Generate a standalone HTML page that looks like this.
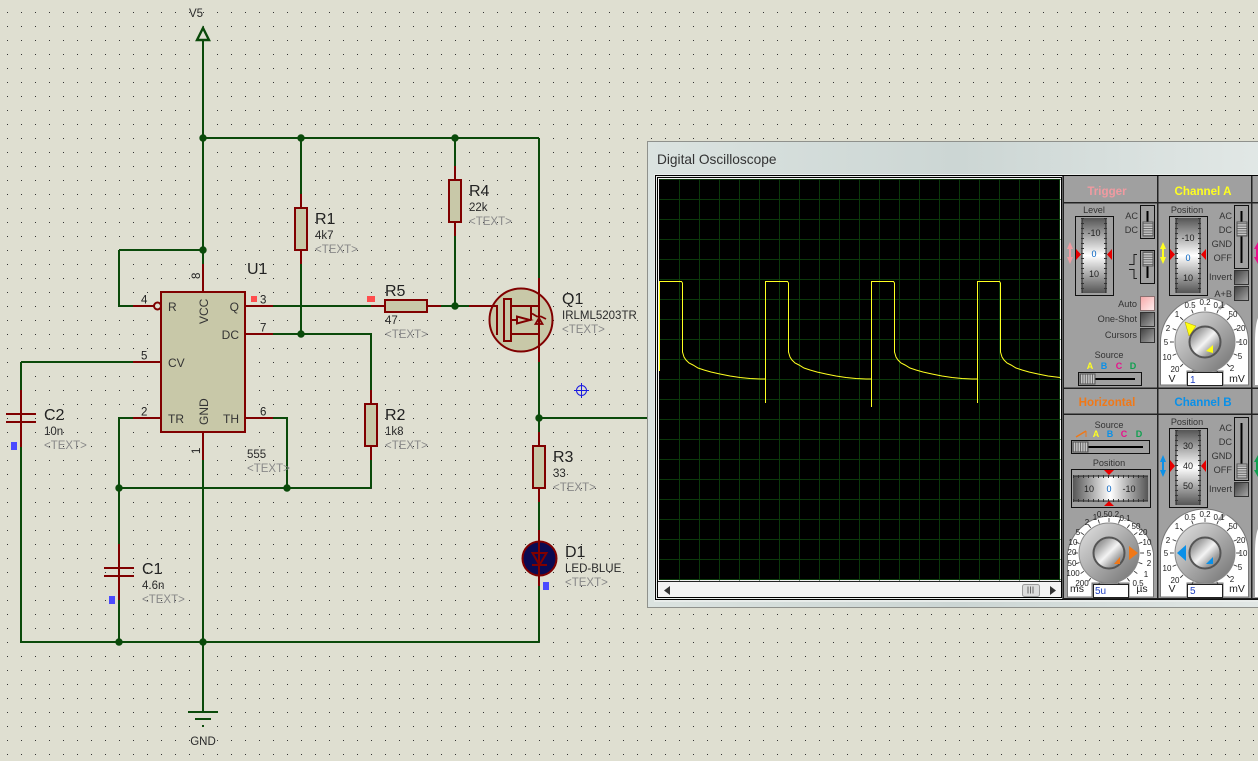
<!DOCTYPE html>
<html><head><meta charset="utf-8"><style>
html,body{margin:0;padding:0;background:#dfdfd1;overflow:hidden}
svg{display:block;font-family:"Liberation Sans",sans-serif}
.g{stroke:#0a4a0a;stroke-width:2;fill:none;shape-rendering:crispEdges}
.r{stroke:#800000;stroke-width:2;fill:none;shape-rendering:crispEdges}
.b{stroke:#800000;stroke-width:2;fill:#c8c8a8;shape-rendering:crispEdges}
.j{fill:#0a4a0a}
.big{font-size:16px;fill:#222}
.sm{font-size:11.500px;fill:#2a2a2a}
.tx{font-size:11.500px;fill:#888}
.pin{font-size:11.500px;fill:#222}
.in{font-size:12px;fill:#333}
.l{font-size:9.200px;fill:#333}
.e{text-anchor:end}
.m{text-anchor:middle}
.d{font-size:8px;fill:#222;text-anchor:middle}
.w{font-size:10.500px;fill:#222;text-anchor:middle}
.n{font-size:9px;fill:#222;text-anchor:middle}
.p{font-size:9.100px;fill:#333;text-anchor:middle}
.h{font-size:11.600px;font-weight:bold;text-anchor:middle}
.gl{stroke:#0b380b;stroke-width:1;shape-rendering:crispEdges}
.tk{fill:none;stroke:#333;stroke-width:4}
</style></head><body>
<svg width="1258" height="761" viewBox="0 0 1258 761" xmlns="http://www.w3.org/2000/svg">
<defs>
<pattern id="dots" x="7" y="12" width="14" height="14" patternUnits="userSpaceOnUse"><rect width="1" height="1" fill="#333"/></pattern>
<pattern id="stH" width="4" height="2.400" patternUnits="userSpaceOnUse"><rect width="4" height="2.400" fill="#c8c8c8"/><rect width="4" height="1" fill="#6a6a6a"/></pattern>
<pattern id="stV" width="2.400" height="4" patternUnits="userSpaceOnUse"><rect width="2.400" height="4" fill="#c8c8c8"/><rect width="1" height="4" fill="#6a6a6a"/></pattern>
<linearGradient id="wv" x1="0" y1="0" x2="0" y2="1"><stop offset="0" stop-color="#555"/><stop offset=".5" stop-color="#fff"/><stop offset="1" stop-color="#555"/></linearGradient>
<linearGradient id="wh" x1="0" y1="0" x2="1" y2="0"><stop offset="0" stop-color="#555"/><stop offset=".5" stop-color="#fff"/><stop offset="1" stop-color="#555"/></linearGradient>
<linearGradient id="btn" x1="0" y1="0" x2="1" y2="1"><stop offset="0" stop-color="#3f3f3f"/><stop offset="1" stop-color="#a8a8a8"/></linearGradient>
<linearGradient id="pnk" x1="0" y1="0" x2="1" y2="1"><stop offset="0" stop-color="#f6a8a8"/><stop offset="1" stop-color="#fff0f0"/></linearGradient>
<linearGradient id="kn" x1="0" y1="0" x2="1" y2="1"><stop offset="0" stop-color="#e4e4e4"/><stop offset=".5" stop-color="#aaa"/><stop offset="1" stop-color="#707070"/></linearGradient>
<linearGradient id="ki" x1="0" y1="0" x2="1" y2="1"><stop offset="0" stop-color="#707070"/><stop offset=".25" stop-color="#a8a8a8"/><stop offset=".5" stop-color="#f4f4f4"/><stop offset=".75" stop-color="#999"/><stop offset="1" stop-color="#777"/></linearGradient>
<linearGradient id="tb" x1="0" y1="0" x2="1" y2="0"><stop offset="0" stop-color="#dbe3e0"/><stop offset=".5" stop-color="#ccd6d4"/><stop offset="1" stop-color="#e2e8e6"/></linearGradient>
</defs>
<rect width="1258" height="761" fill="#dfdfd1"/>
<rect width="1258" height="761" fill="url(#dots)"/>

<!-- V5 and green wires -->
<path class="g" d="M203 40V642M203 138H539M301 138V194M455 138V166M455 236V306M301 264V334M119 250H203V264M119 250V306H133M273 306H371M441 306H469M273 334H371V390M371 460V488M21 362H133M21 362V390M21 447V642H539M133 418H119V544M119 600V642M273 418H287V488M119 488H371M203 460V712M539 138V278M539 362V432M539 418H650M539 502V530M539 586V642"/>
<path d="M203 28L197 40H209Z" fill="none" stroke="#0a4a0a" stroke-width="2.400"/>
<g class="j"><circle cx="203" cy="138" r="3.700"/><circle cx="301" cy="138" r="3.700"/><circle cx="455" cy="138" r="3.700"/><circle cx="203" cy="250" r="3.700"/><circle cx="301" cy="334" r="3.700"/><circle cx="455" cy="306" r="3.700"/><circle cx="119" cy="488" r="3.700"/><circle cx="287" cy="488" r="3.700"/><circle cx="119" cy="642" r="3.700"/><circle cx="203" cy="642" r="3.700"/><circle cx="539" cy="418" r="3.700"/></g>
<!-- GND -->
<path class="g" d="M188 712H218M195 719H211M202 726H204"/>
<text x="203" y="745" class="sm m">GND</text>
<text x="196" y="17" class="sm m">V5</text>

<!-- Red pins -->
<path class="r" d="M301 194V208M301 250V264M455 166V180M455 222V236M203 264V292M133 306H154M245 306H273M245 334H273M133 362H161M133 418H161M245 418H273M203 432V460M371 390V404M371 446V460M371 306H385M427 306H441M469 306H497M539 278V362M539 432V446M539 488V502M539 530V586M21 390V447M119 544V600"/>
<!-- U1 -->
<rect class="b" x="161" y="292" width="84" height="140"/>
<circle cx="157.500" cy="306" r="3.500" fill="#dfdfd1" stroke="#800000" stroke-width="2"/>
<!-- Resistors -->
<rect class="b" x="295" y="208" width="12" height="42"/>
<rect class="b" x="449" y="180" width="12" height="42"/>
<rect class="b" x="385" y="300" width="42" height="12"/>
<rect class="b" x="365" y="404" width="12" height="42"/>
<rect class="b" x="533" y="446" width="12" height="42"/>
<!-- Caps -->
<path class="r" d="M6 414H36M6 422H36M104 568H134M104 576H134"/>
<!-- Q1 -->
<circle cx="521" cy="320" r="31.500" fill="#c8c8a8" stroke="#800000" stroke-width="2"/>
<path class="r" d="M539 288V352M489 306H497V335M511 306H539M511 334H539M531 306V320M511 320H517"/>
<rect class="b" x="504" y="299" width="7" height="42"/>
<path d="M517 316.500V323.500L530 320Z" fill="none" stroke="#800000" stroke-width="2"/>
<path d="M530 320H531" stroke="#800000" stroke-width="2"/>
<path d="M539 318L535.500 324H542.500Z" fill="none" stroke="#800000" stroke-width="1.800"/>
<path d="M532 313.500L537 316.500H541L546 319" fill="none" stroke="#800000" stroke-width="1.800"/>
<!-- D1 -->
<circle cx="539.500" cy="558.500" r="17" fill="#0a0a52" stroke="#800000" stroke-width="2"/>
<path d="M532.500 553H546.500L539.500 565Z" fill="#0a0a52" stroke="#800000" stroke-width="2"/>
<path d="M532 565H547" stroke="#800000" stroke-width="2"/>
<path class="r" d="M539 541V575"/>

<!-- Cursor -->
<g fill="none" stroke="#1a1ae0" stroke-width="1"><circle cx="581.500" cy="390.500" r="5"/><path d="M581.500 383V398M574 390.500H589"/></g>

<!-- Markers -->
<g fill="#ff4d4d"><rect x="251" y="296" width="6" height="6"/><rect x="367" y="296" width="8" height="6"/></g>
<g fill="#4a4aff"><rect x="11" y="442" width="6" height="8"/><rect x="109" y="596" width="6" height="8"/><rect x="543" y="582" width="6" height="8"/></g>

<!-- Schematic text -->
<text x="315" y="224" class="big">R1</text><text x="315" y="239" class="sm">4k7</text><text x="315" y="253" class="tx">&lt;TEXT&gt;</text>
<text x="469" y="196" class="big">R4</text><text x="469" y="211" class="sm">22k</text><text x="469" y="225" class="tx">&lt;TEXT&gt;</text>
<text x="385" y="296" class="big">R5</text><text x="385" y="324" class="sm">47</text><text x="385" y="338" class="tx">&lt;TEXT&gt;</text>
<text x="385" y="420" class="big">R2</text><text x="385" y="435" class="sm">1k8</text><text x="385" y="449" class="tx">&lt;TEXT&gt;</text>
<text x="553" y="462" class="big">R3</text><text x="553" y="477" class="sm">33</text><text x="553" y="491" class="tx">&lt;TEXT&gt;</text>
<text x="565" y="557" class="big">D1</text><text x="565" y="572" class="sm">LED-BLUE</text><text x="565" y="586" class="tx">&lt;TEXT&gt;</text>
<text x="562" y="304" class="big">Q1</text><text x="562" y="319" class="sm">IRLML5203TR</text><text x="562" y="333" class="tx">&lt;TEXT&gt;</text>
<text x="44" y="420" class="big">C2</text><text x="44" y="435" class="sm">10n</text><text x="44" y="449" class="tx">&lt;TEXT&gt;</text>
<text x="142" y="574" class="big">C1</text><text x="142" y="589" class="sm">4.6n</text><text x="142" y="603" class="tx">&lt;TEXT&gt;</text>
<text x="247" y="274" class="big">U1</text><text x="247" y="458" class="sm">555</text><text x="247" y="472" class="tx">&lt;TEXT&gt;</text>
<text x="141" y="303.500" class="pin">4</text><text x="260" y="303.500" class="pin">3</text><text x="260" y="331.500" class="pin">7</text><text x="141" y="359.500" class="pin">5</text><text x="141" y="415.500" class="pin">2</text><text x="260" y="415.500" class="pin">6</text>
<text transform="translate(200,279) rotate(-90)" class="pin">8</text><text transform="translate(200,454) rotate(-90)" class="pin">1</text>
<text x="168" y="311" class="in">R</text><text x="239" y="311" class="in e">Q</text><text x="239" y="339" class="in e">DC</text><text x="168" y="367" class="in">CV</text><text x="168" y="423" class="in">TR</text><text x="239" y="423" class="in e">TH</text>
<text transform="translate(208,324) rotate(-90)" class="in">VCC</text><text transform="translate(208,425) rotate(-90)" class="in">GND</text>

<!-- Window -->
<rect x="647" y="141" width="620" height="467" fill="#8f918c"/>
<rect x="648" y="142" width="620" height="465" fill="url(#tb)"/>
<text x="657" y="164" style="font-size:13.700px;fill:#333">Digital Oscilloscope</text>
<rect x="654" y="174" width="610" height="428" fill="#e8ecea"/>
<rect x="655.500" y="175.500" width="610" height="424" fill="none" stroke="#000" stroke-width="1"/>
<rect x="657.500" y="177.500" width="404" height="420" fill="#f1f1f1" stroke="#000" stroke-width="1"/>
<rect x="659" y="179" width="401" height="401" fill="#000"/>
<g class="gl" transform="translate(.5,.5)">
<path d="M679 179V580M699 179V580M719 179V580M739 179V580M759 179V580M779 179V580M799 179V580M819 179V580M839 179V580M859 179V580M879 179V580M899 179V580M919 179V580M939 179V580M959 179V580M979 179V580M999 179V580M1019 179V580M1039 179V580M1059 179V580"/>
<path d="M659 179H1060M659 199H1060M659 219H1060M659 239H1060M659 259H1060M659 279H1060M659 299H1060M659 319H1060M659 339H1060M659 359H1060M659 379H1060M659 399H1060M659 419H1060M659 439H1060M659 459H1060M659 479H1060M659 499H1060M659 519H1060M659 539H1060M659 559H1060M659 579H1060"/>
</g>
<g fill="none" stroke="#ffff20" stroke-width="1">
<path d="M659.500 371V281.500H681.500L682.500 283V352L684 357L686 360L689 363L693 365L698 368L704 370L711 372L720 374L730 376L740 377.500L750 378.500L760 379H765.500V403V281.500H787.500L788.500 283V352L790 357L792 360L795 363L799 365L804 368L810 370L817 372L826 374L836 376L846 377.500L856 378.500L866 379H871.500V407V281.500H893.500L894.500 283V352L896 357L898 360L901 363L905 365L910 368L916 370L923 372L932 374L942 376L952 377.500L962 378.500L972 379H977.500V403V281.500H999.500L1000.500 283V352L1002 357L1004 360L1007 363L1011 365L1016 368L1022 370L1029 372L1038 374L1048 376L1060 377.500"/>
</g>
<!-- scrollbar -->
<rect x="658" y="581" width="403" height="16" fill="#f3f3f3"/>
<path d="M658 581.500H1061" stroke="#222" stroke-width="1"/>
<path d="M670 586V595L664 590.500Z" fill="#333"/>
<path d="M1050 586V595L1056 590.500Z" fill="#333"/>
<rect x="1022.500" y="584.500" width="17" height="12" rx="2" fill="#dcdcdc" stroke="#9a9a9a"/>
<path d="M1028 586.500V593.500M1030.500 586.500V593.500M1033 586.500V593.500" stroke="#666"/>

<!-- Right panels -->
<rect x="1062" y="176" width="196" height="423" fill="#a0a0a0"/>
<g stroke="#222" stroke-width="1.500" fill="none" shape-rendering="crispEdges">
<path d="M1063 176V599M1157.500 176V599M1251.500 176V599M1063 202.500H1258M1063 388H1258M1063 414H1258M1063 598.500H1258"/>
</g>
<text x="1107" y="195" class="h" fill="#f09aa0">Trigger</text>
<text x="1203" y="195" class="h" fill="#ffff20">Channel A</text>
<text x="1107" y="406" class="h" fill="#f07818">Horizontal</text>
<text x="1203" y="406" class="h" fill="#0a90e8">Channel B</text>

<!-- Trigger -->
<text x="1094" y="213" class="p">Level</text>
<rect x="1075.500" y="216.500" width="38" height="79" fill="#a0a0a0" stroke="#111"/>
<rect x="1082" y="218" width="24" height="75" fill="url(#wv)"/>
<path d="M1082 218V293M1106 218V293" stroke="#222" stroke-width="1"/>
<path d="M1082.500 218V293M1105.500 218V293" stroke="#333" stroke-width="3" stroke-dasharray="1 4" fill="none"/>
<text x="1094" y="236" class="n">-10</text><text x="1094" y="257" class="n" style="fill:#0060c0">0</text><text x="1094" y="277" class="n">10</text>
<path d="M1076 249L1081 254.500L1076 260ZM1112 249L1107 254.500L1112 260Z" fill="#e80000"/>
<path d="M1070 242L1067 249H1069V257H1067L1070 264L1073 257H1071V249H1073Z" fill="#f09aa0"/>
<text x="1138" y="219" class="l e">AC</text><text x="1138" y="233" class="l e">DC</text>
<rect x="1140.500" y="205.500" width="14" height="33" fill="#a0a0a0" stroke="#111"/><path d="M1147.500 211V234" stroke="#000" stroke-width="2"/><rect x="1143" y="222" width="10" height="14" fill="url(#stH)" stroke="#555"/>
<rect x="1140.500" y="250.500" width="14" height="33" fill="#a0a0a0" stroke="#111"/><path d="M1147.500 256V278" stroke="#000" stroke-width="2"/><rect x="1143" y="252" width="10" height="14" fill="url(#stH)" stroke="#555"/>
<path d="M1137 254.500H1134V264.500H1129M1129 269.500H1134V278.500H1137" fill="none" stroke="#222" shape-rendering="crispEdges"/>
<text x="1137" y="307" class="l e">Auto</text><text x="1137" y="322" class="l e">One-Shot</text><text x="1137" y="338" class="l e">Cursors</text>
<rect x="1140.500" y="296.500" width="14" height="14" fill="url(#pnk)" stroke="#8a7070"/><rect x="1140.500" y="312.500" width="14" height="14" fill="url(#btn)" stroke="#333"/><rect x="1140.500" y="328.500" width="14" height="14" fill="url(#btn)" stroke="#333"/>
<text x="1109" y="358" class="p">Source</text>
<g style="font-size:9px;font-weight:bold" text-anchor="middle"><text x="1090" y="369" fill="#ffff20">A</text><text x="1104" y="369" fill="#0a90e8">B</text><text x="1119" y="369" fill="#e8108c">C</text><text x="1133" y="369" fill="#10a050">D</text></g>
<rect x="1078.500" y="372.500" width="63" height="13" fill="#a0a0a0" stroke="#111"/><path d="M1094 379H1135" stroke="#000" stroke-width="2"/><rect x="1080" y="374" width="15" height="10" fill="url(#stV)" stroke="#555"/>

<!-- Channel A -->
<text x="1187" y="213" class="p">Position</text>
<rect x="1169.500" y="216.500" width="38" height="79" fill="#a0a0a0" stroke="#111"/>
<rect x="1176" y="218" width="24" height="75" fill="url(#wv)"/>
<path d="M1176 218V293M1200 218V293" stroke="#222" stroke-width="1"/>
<path d="M1176.500 218V293M1199.500 218V293" stroke="#333" stroke-width="3" stroke-dasharray="1 4" fill="none"/>
<text x="1188" y="241" class="n">-10</text><text x="1188" y="261" class="n" style="fill:#0060c0">0</text><text x="1188" y="281" class="n">10</text>
<path d="M1170 249L1175 254.500L1170 260ZM1206 249L1201 254.500L1206 260Z" fill="#e80000"/>
<path d="M1163 242L1160 249H1162V257H1160L1163 264L1166 257H1164V249H1166Z" fill="#ffff20"/>
<text x="1232" y="219" class="l e">AC</text><text x="1232" y="233" class="l e">DC</text><text x="1232" y="247" class="l e">GND</text><text x="1232" y="261" class="l e">OFF</text>
<rect x="1234.500" y="205.500" width="14" height="63" fill="#a0a0a0" stroke="#111"/><path d="M1241.500 211V263" stroke="#000" stroke-width="2"/><rect x="1237" y="222" width="10" height="14" fill="url(#stH)" stroke="#555"/>
<text x="1232" y="280" class="l e">Invert</text><text x="1232" y="297" class="l e">A+B</text>
<rect x="1234.500" y="270.500" width="14" height="14" fill="url(#btn)" stroke="#333"/><rect x="1234.500" y="286.500" width="14" height="14" fill="url(#btn)" stroke="#333"/>
<path d="M1160.500 385V342A44 44 0 0 1 1248.500 342V385H1223V371H1187V385Z" fill="#fff" stroke="#777"/>
<path d="M1219 309L1226 302" stroke="#a0a0a0" stroke-width="3"/>
<circle cx="1205" cy="342" r="33" class="tk" pathLength="360" stroke-dasharray="1.500 21" stroke-dashoffset=".75"/>
<circle cx="1205" cy="342" r="30" fill="url(#kn)" stroke="#888"/>
<circle cx="1205" cy="342" r="15.500" fill="url(#ki)" stroke="#555" stroke-width="2"/>
<path d="M1185 322L1196 326L1189 336Z" fill="#ffff10" stroke="#b0a000" stroke-width=".5"/><path d="M1213 345L1213 353L1206 351Z" fill="#ffff10"/>
<g><text x="1190" y="308" class="d">0.5</text><text x="1205" y="305" class="d">0.2</text><text x="1219" y="308" class="d">0.1</text><text x="1177" y="317" class="d">1</text><text x="1168" y="331" class="d">2</text><text x="1166" y="345" class="d">5</text><text x="1167" y="360" class="d">10</text><text x="1175" y="372" class="d">20</text><text x="1233" y="317" class="d">50</text><text x="1241" y="331" class="d">20</text><text x="1243" y="345" class="d">10</text><text x="1240" y="359" class="d">5</text><text x="1232" y="371" class="d">2</text></g>
<text x="1172" y="382" class="w">V</text><text x="1237" y="382" class="w">mV</text>
<rect x="1187.500" y="372.500" width="35" height="13" fill="#fff" stroke="#222"/><text x="1190" y="383" style="font-size:10px;fill:#2040c0">1</text>

<!-- Horizontal -->
<text x="1109" y="428" class="p">Source</text>
<path d="M1076 437L1086 431" stroke="#f07818" stroke-width="1.500"/><path d="M1086 431V437" stroke="#f07818"/>
<g style="font-size:9px;font-weight:bold" text-anchor="middle"><text x="1096" y="437" fill="#ffff20">A</text><text x="1110" y="437" fill="#0a90e8">B</text><text x="1124" y="437" fill="#e8108c">C</text><text x="1139" y="437" fill="#10a050">D</text></g>
<rect x="1071.500" y="440.500" width="78" height="13" fill="#a0a0a0" stroke="#111"/><path d="M1087 447H1143" stroke="#000" stroke-width="2"/><rect x="1073" y="442" width="15" height="10" fill="url(#stV)" stroke="#555"/>
<text x="1109" y="466" class="p">Position</text>
<rect x="1071.500" y="469.500" width="79" height="38" fill="#a0a0a0" stroke="#111"/>
<rect x="1073" y="476" width="75" height="25" fill="url(#wh)"/>
<path d="M1073 476H1148M1073 501H1148" stroke="#222" stroke-width="1"/>
<path d="M1073 476.500H1148M1073 500.500H1148" stroke="#333" stroke-width="3" stroke-dasharray="1 4" fill="none"/>
<text x="1089" y="492" class="n">10</text><text x="1109" y="492" class="n" style="fill:#0060c0">0</text><text x="1129" y="492" class="n">-10</text>
<path d="M1104 470H1114L1109 475ZM1104 506H1114L1109 501Z" fill="#e80000"/>
<path d="M1067.500 597V553A43.500 43.500 0 0 1 1153.500 553V597H1129V583H1092V597Z" fill="#fff" stroke="#777"/>
<path d="M1123 518L1129 512" stroke="#a0a0a0" stroke-width="3"/>
<circle cx="1109" cy="553" r="33" class="tk" pathLength="360" stroke-dasharray="1.500 16.500" stroke-dashoffset=".75"/>
<circle cx="1109" cy="553" r="30" fill="url(#kn)" stroke="#888"/>
<circle cx="1109" cy="553" r="15.500" fill="url(#ki)" stroke="#555" stroke-width="2"/>
<path d="M1129 546L1138 553L1129 560Z" fill="#f07818"/><path d="M1120 557V564H1114Z" fill="#f07818"/>
<g><text x="1108" y="517" class="d">0.50.2</text><text x="1095" y="520" class="d">1</text><text x="1087" y="525" class="d">2</text><text x="1078" y="535" class="d">5</text><text x="1073" y="545" class="d">10</text><text x="1072" y="555" class="d">20</text><text x="1072" y="566" class="d">50</text><text x="1073" y="576" class="d">100</text><text x="1082" y="586" class="d">200</text><text x="1125" y="521" class="d">0.1</text><text x="1136" y="529" class="d">50</text><text x="1143" y="535" class="d">20</text><text x="1147" y="545" class="d">10</text><text x="1149" y="556" class="d">5</text><text x="1149" y="566" class="d">2</text><text x="1146" y="577" class="d">1</text><text x="1138" y="586" class="d">0.5</text></g>
<text x="1077" y="592" class="w">ms</text><text x="1142" y="592" class="w">µs</text>
<rect x="1093.500" y="584.500" width="35" height="13" fill="#fff" stroke="#222"/><text x="1095" y="594" style="font-size:10px;fill:#2040c0">5u</text>

<!-- Channel B -->
<text x="1187" y="425" class="p">Position</text>
<rect x="1169.500" y="428.500" width="38" height="79" fill="#a0a0a0" stroke="#111"/>
<rect x="1176" y="430" width="24" height="75" fill="url(#wv)"/>
<path d="M1176 430V505M1200 430V505" stroke="#222" stroke-width="1"/>
<path d="M1176.500 430V505M1199.500 430V505" stroke="#333" stroke-width="3" stroke-dasharray="1 4" fill="none"/>
<text x="1188" y="449" class="n">30</text><text x="1188" y="469" class="n">40</text><text x="1188" y="489" class="n">50</text>
<path d="M1170 460L1175 466L1170 472ZM1206 460L1201 466L1206 472Z" fill="#e80000"/>
<path d="M1163 455L1160 462H1162V470H1160L1163 477L1166 470H1164V462H1166Z" fill="#0a90e8"/>
<text x="1232" y="431" class="l e">AC</text><text x="1232" y="445" class="l e">DC</text><text x="1232" y="459" class="l e">GND</text><text x="1232" y="473" class="l e">OFF</text>
<rect x="1234.500" y="417.500" width="14" height="63" fill="#a0a0a0" stroke="#111"/><path d="M1241.500 423V475" stroke="#000" stroke-width="2"/><rect x="1237" y="464" width="10" height="14" fill="url(#stH)" stroke="#555"/>
<text x="1232" y="492" class="l e">Invert</text><rect x="1234.500" y="482.500" width="14" height="14" fill="url(#btn)" stroke="#333"/>
<path d="M1160.500 597V553A44 44 0 0 1 1248.500 553V597H1223V583H1187V597Z" fill="#fff" stroke="#777"/>
<path d="M1219 520L1226 513" stroke="#a0a0a0" stroke-width="3"/>
<circle cx="1205" cy="553" r="33" class="tk" pathLength="360" stroke-dasharray="1.500 21" stroke-dashoffset=".75"/>
<circle cx="1205" cy="553" r="30" fill="url(#kn)" stroke="#888"/>
<circle cx="1205" cy="553" r="15.500" fill="url(#ki)" stroke="#555" stroke-width="2"/>
<path d="M1186 545V561L1177 553Z" fill="#0a90e8"/><path d="M1213 557V564H1206Z" fill="#0a90e8"/>
<g><text x="1190" y="520" class="d">0.5</text><text x="1205" y="517" class="d">0.2</text><text x="1219" y="520" class="d">0.1</text><text x="1177" y="529" class="d">1</text><text x="1168" y="543" class="d">2</text><text x="1166" y="556" class="d">5</text><text x="1167" y="571" class="d">10</text><text x="1175" y="583" class="d">20</text><text x="1233" y="529" class="d">50</text><text x="1241" y="543" class="d">20</text><text x="1243" y="556" class="d">10</text><text x="1240" y="570" class="d">5</text><text x="1232" y="582" class="d">2</text></g>
<text x="1172" y="592" class="w">V</text><text x="1237" y="592" class="w">mV</text>
<rect x="1187.500" y="584.500" width="35" height="13" fill="#fff" stroke="#222"/><text x="1190" y="594" style="font-size:10px;fill:#2040c0">5</text>

<!-- Partial right column -->
<path d="M1258 242L1254 249H1256V257H1254L1258 264Z" fill="#e8108c"/>
<path d="M1258 455L1254 462H1256V470H1254L1258 477Z" fill="#10a050"/>
<path d="M1255 385V342Q1255 325 1258 318V385ZM1255 597V553Q1255 536 1258 529V597Z" fill="#fff"/>
</svg>
</body></html>
